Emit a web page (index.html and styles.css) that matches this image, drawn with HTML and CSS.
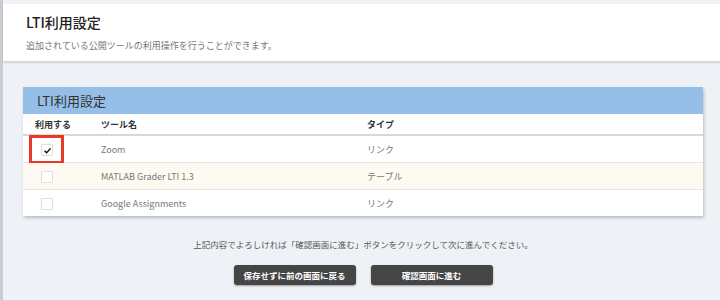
FILE: index.html
```html
<!DOCTYPE html>
<html lang="ja">
<head>
    <meta charset="UTF-8">
    <meta name="viewport" content="width=device-width, initial-scale=1.0">
    <title>LTI利用設定</title>
    <link rel="stylesheet" href="styles.css">
</head>
<body>
    <div class="page">
        <div class="head">
            <h1 class="head-title">LTI利用設定</h1>
            <p class="head-desc">追加されている公開ツールの利用操作を行うことができます。</p>
        </div>

        <div class="main">
            <div class="card">
                <div class="card-title">LTI利用設定</div>
                <table class="tools">
                    <thead>
                        <tr>
                            <th class="col-use">利用する</th>
                            <th class="col-name">ツール名</th>
                            <th>タイプ</th>
                        </tr>
                    </thead>
                    <tbody>
                        <tr>
                            <td class="col-use">
                                <span class="chk on">
                                    <svg width="9" height="9" viewBox="0 0 9 9"><polyline points="1.5,4.8 3.6,6.8 7.6,2.4" fill="none" stroke="#111" stroke-width="1.4"/></svg>
                                </span>
                                <span class="mark"></span>
                            </td>
                            <td>Zoom</td>
                            <td>リンク</td>
                        </tr>
                        <tr class="odd">
                            <td class="col-use"><span class="chk"></span></td>
                            <td>MATLAB Grader LTI 1.3</td>
                            <td>テーブル</td>
                        </tr>
                        <tr>
                            <td class="col-use"><span class="chk"></span></td>
                            <td>Google Assignments</td>
                            <td>リンク</td>
                        </tr>
                    </tbody>
                </table>
            </div>

            <p class="note">上記内容でよろしければ「確認画面に進む」ボタンをクリックして次に進んでください。</p>
            <div class="buttons">
                <button class="btn">保存せずに前の画面に戻る</button>
                <button class="btn">確認画面に進む</button>
            </div>
        </div>
    </div>
</body>
</html>
```

FILE: styles.css
```css
body{
    margin: 0;
    background-color: #eef2f6;
    font-family: "Noto Sans CJK JP", "Noto Sans", sans-serif;
    color: #333;
}
.page{
    border-left: 3px solid #c9ccd0;
    padding-top: 4px;
    min-height: 296px;
}
.head{
    background-color: #fff;
    height: 57px;
    box-sizing: border-box;
    padding: 9px 0 0 23px;
    box-shadow: 0 2px 2px rgba(0,0,0,0.12);
}
.head-title{
    margin: 0;
    font-size: 14px;
    font-weight: 500;
    line-height: 18px;
    color: #222;
}
.head-desc{
    margin: 9px 0 0 0;
    font-size: 9px;
    line-height: 12px;
    color: #777;
}
.main{
    padding: 26px 17px 0 20px;
}
.card{
    background-color: #fff;
    box-shadow: 1px 2px 3px rgba(0,0,0,0.22);
}
.card-title{
    background-color: #95bfe7;
    height: 27px;
    line-height: 27px;
    padding-left: 14px;
    font-size: 13px;
    color: #333;
}
.tools{
    width: 100%;
    border-collapse: collapse;
    font-size: 9px;
}
.tools th{
    text-align: left;
    font-weight: bold;
    height: 20px;
    padding: 0;
    border-bottom: 2px solid #d8d8d8;
    color: #333;
}
.tools td{
    height: 26px;
    padding: 0;
    color: #777;
    border-bottom: 1px solid #e4e4e4;
}
.tools tbody tr:last-child td{
    border-bottom: none;
}
.tools tr.odd td{
    background-color: #fffaf1;
}
.tools .col-use{
    width: 66px;
    padding-left: 12px;
    position: relative;
}
.tools .col-name{
    width: 266px;
}
.chk{
    display: inline-block;
    box-sizing: border-box;
    width: 12px;
    height: 12px;
    border: 1px solid #ddd;
    border-radius: 1px;
    margin-left: 6px;
    vertical-align: middle;
    background-color: #fff;
}
.chk svg{
    display: block;
    margin: 1px 0 0 1px;
}
/* red highlight drawn over the first checkbox */
.mark{
    position: absolute;
    left: 6px;
    top: -1px;
    width: 29px;
    height: 23px;
    border: 3px solid #e8392a;
}
.note{
    margin: 22px 0 0 0;
    text-align: center;
    font-size: 8.5px;
    color: #555;
}
.buttons{
    display: flex;
    justify-content: center;
    gap: 15px;
    margin-top: 15px;
}
.btn{
    width: 122px;
    height: 20px;
    border: none;
    border-radius: 3px;
    background-color: #454545;
    color: #fff;
    font-family: "Noto Sans CJK JP", sans-serif;
    font-size: 8.5px;
    font-weight: bold;
    box-shadow: 0 1px 2px rgba(0,0,0,0.35);
    padding: 0;
}
```
